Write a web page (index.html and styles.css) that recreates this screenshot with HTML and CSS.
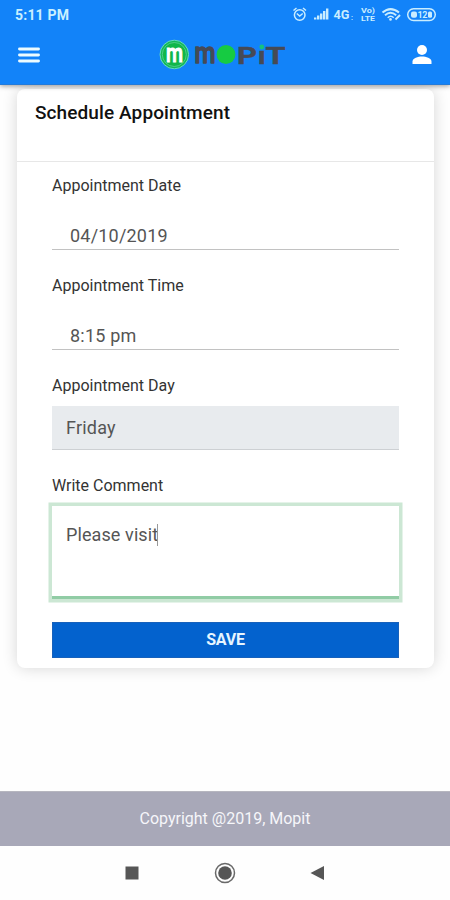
FILE: index.html
```
<!DOCTYPE html>
<html lang="en">
<head>
<meta charset="utf-8">
<title>Schedule Appointment</title>
<link rel="stylesheet" href="styles.css">
</head>
<body>
<header class="top">
  <div class="status">
    <span class="clock">5:11 PM</span>
    <svg class="status-icons" width="150" height="20" viewBox="290 5 150 20">
      <g fill="none" stroke="#c9edff" stroke-width="1.5">
        <circle cx="299.7" cy="15" r="5.3"/>
        <path d="M293.5 10.5l3-2.5M306 10.500l-3-2.500M296.800 13.500l2.900 2.500 3-2.500"/>
        <path d="M382.500 12.600q8-7 16.500 0" stroke-width="2"/>
        <path d="M385 15.300q5.500-5 11.200 0" stroke-width="1.900"/>
        <path d="M387.700 17.700q3-2.800 6 0" stroke-width="1.500"/>
        <path d="M395.500 19.500l4.500-4.500" stroke-width="2"/>
        <rect x="407.700" y="8.700" width="27.600" height="11.800" rx="5.900"/>
      </g>
      <g fill="#c9edff">
        <path d="M314 19.500v-2h2.400v2zM317 19.500v-4h2.400v4zM320 19.500v-6h2.400v6zM323 19.500v-8.500h2.400v8.500zM326 19.500v-11h2.400v11z"/>
        <circle cx="390.500" cy="19.400" r="1.300"/>
        <rect x="411" y="11.500" width="6" height="6.200" rx="2"/>
        <rect x="428" y="11.500" width="4" height="6.200" rx="1.500"/>
      </g>
      <g class="status-text">
        <text x="333.500" y="19" font-size="12" textLength="16" lengthAdjust="spacingAndGlyphs">4G</text>
        <text x="351" y="19.500" font-size="7">:</text>
        <text x="361" y="13.300" font-size="6.500" textLength="14" lengthAdjust="spacingAndGlyphs">Vo)</text>
        <text x="361" y="21" font-size="6.500" textLength="14" lengthAdjust="spacingAndGlyphs">LTE</text>
        <text x="417.500" y="18" font-size="9" textLength="10">12</text>
      </g>
    </svg>
  </div>
  <div class="bar">
    <svg class="menu" width="22" height="16" viewBox="0 0 22 16" stroke="#ecfbff" stroke-width="2.900" stroke-linecap="round"><path d="M1.500 2h19M1.500 8h19M1.500 14h19"/></svg>
    <svg class="logo" width="130" height="50" viewBox="158 30 130 50">
      <circle cx="175.300" cy="54.500" r="14.300" fill="#13b957" stroke="#63d8c5" stroke-width="1"/>
      <circle cx="175.300" cy="54.500" r="12" fill="#10b64a" stroke="#66d4a1" stroke-width=".7"/>
      <text class="mark" x="167" y="61.500" font-size="25" textLength="17" lengthAdjust="spacingAndGlyphs">m</text>
      <g class="word">
        <text class="tall" x="195.500" y="63" font-size="29" textLength="21" lengthAdjust="spacingAndGlyphs">m</text>
        <text x="238" y="63.500" font-size="24" textLength="20" lengthAdjust="spacingAndGlyphs">P</text>
        <text x="258.800" y="63.500" font-size="24" textLength="8" lengthAdjust="spacingAndGlyphs">ı</text>
        <text x="266.500" y="63.500" font-size="24" textLength="20" lengthAdjust="spacingAndGlyphs">T</text>
      </g>
      <circle cx="227" cy="54.500" r="9.400" fill="#16cb42"/>
      <circle cx="262.800" cy="47" r="2.400" fill="#16c27d"/>
    </svg>
    <svg class="person" width="20" height="20" viewBox="0 0 20 20" fill="#fff"><circle cx="10" cy="5" r="5"/><path d="M.500 19v-2.500c0-3.300 5.500-5 9.500-5s9.500 1.700 9.500 5V19z"/></svg>
  </div>
</header>
<main>
  <form class="card">
    <h1><span>Schedule Appointment</span></h1>
    <div class="fields">
      <div class="field"><label>Appointment Date</label><div class="line">04/10/2019</div></div>
      <div class="field"><label>Appointment Time</label><div class="line">8:15 pm</div></div>
      <div class="field"><label>Appointment Day</label><div class="readonly">Friday</div></div>
      <div class="field"><label>Write Comment</label><div class="comment"><span>Please visit</span><i class="caret"></i></div></div>
      <button type="button" class="save">SAVE</button>
    </div>
  </form>
</main>
<footer>Copyright @2019, Mopit</footer>
<nav>
  <svg width="22" height="22" viewBox="0 0 22 22"><path fill="#565656" d="M4.500 4.500h13v13h-13z"/></svg>
  <svg width="22" height="22" viewBox="0 0 22 22"><circle cx="11" cy="11" r="9.500" fill="none" stroke="#696969" stroke-width="1.500"/><circle cx="11" cy="11" r="6.800" fill="#565656"/></svg>
  <svg width="22" height="22" viewBox="0 0 22 22"><path fill="#565656" d="M3.500 11 17 4v14z"/></svg>
</nav>
</body>
</html>
```
FILE: styles.css
```
* { box-sizing: border-box; }
body { margin: 0; width: 450px; height: 900px; overflow: hidden; display: flex; flex-direction: column; background: #fefefe; font-family: Roboto, sans-serif; }
.top { height: 85px; flex: none; background: #1283f9; border-bottom: 1px solid #237bda; box-shadow: 0 1px 5px rgba(0,0,0,.4); z-index: 1; }
.status { height: 30px; display: flex; justify-content: space-between; padding: 5px 10px 0 15px; }
.clock { color: #c9f0ff; font-size: 14px; line-height: 20px; font-weight: 700; letter-spacing: .2px; }
.status-text { fill: #c9edff; font-weight: 700; }
.bar { height: 50px; display: flex; align-items: center; justify-content: space-between; padding: 0 18px; }
.menu { margin-right: -4px; }
.logo { margin-left: -4px; }
.mark { fill: #fff; stroke: #fff; stroke-width: 1px; font-weight: 500; }
.word { fill: #464a55; font-weight: 700; stroke: #464a55; stroke-width: .4px; }
.tall { stroke-width: 1.4px; stroke-linejoin: round; font-weight: 500; }
main { height: 706px; flex: none; padding: 4px 16px 0 17px; }
.card { height: 579px; background: #fff; border-radius: 8px; box-shadow: 0 0 15px rgba(0,0,0,.16); }
h1 { margin: 0; height: 73px; padding: 11px 18px; border-bottom: 1px solid #e7e7e7; color: #111; font-size: 19px; line-height: 26px; font-weight: 500; letter-spacing: .1px; white-space: nowrap; }
.fields { padding: 11px 35px 0; }
.field { height: 100px; }
label { display: block; height: 23px; line-height: 25px; font-size: 16px; color: #333; letter-spacing: 0; }
.line { height: 54px; padding: 29px 18px 0; line-height: 22px; font-size: 18px; border-bottom: 1px solid #c2c2c2; color: #555; letter-spacing: .2px; }
.readonly { height: 44px; margin-top: 10px; padding: 11px 14px; line-height: 22px; font-size: 18px; color: #555; background: #e8ebee; border-bottom: 1px solid #cdd0d3; letter-spacing: .2px; }
.field:nth-child(4) { height: 149px; }
.comment { height: 93px; margin-top: 10px; padding: 18px 14px; display: flex; line-height: 22px; font-size: 18px; color: #555; background: #fff; border-bottom: 3px solid #91cca5; box-shadow: 0 0 0 3.500px #cce7d4; letter-spacing: .1px; }
.caret { width: 1px; height: 22px; margin-left: -1px; background: #999; }
.save { display: block; width: 100%; height: 36px; padding: 0; border: 1px solid #1761bb; background: #0362ce; color: #e6f5ff; font: 700 16px/34px Roboto, sans-serif; letter-spacing: -.2px; }
footer { height: 55px; flex: none; background: #a8a8b8; border-top: 1px solid #b6b6bf; color: #f6f6fa; text-align: center; font-size: 16px; line-height: 53px; letter-spacing: 0; }
nav { height: 54px; display: flex; align-items: center; justify-content: center; gap: 71px; }
```
